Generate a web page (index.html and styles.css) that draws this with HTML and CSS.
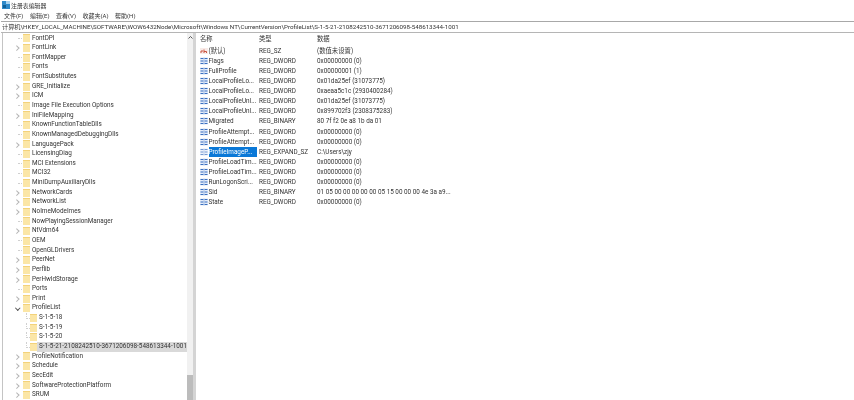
FILE: index.html
```html
<!DOCTYPE html>
<html lang="en">
<head>
    <meta charset="UTF-8">
    <title>注册表编辑器</title>
    <link rel="stylesheet" href="styles.css">
</head>
<body>
    <svg class="defs" width="0" height="0">
        <symbol id="reg" viewBox="0 0 8 8">
            <rect x="0" y="0.5" width="8" height="7" fill="#e4ecf8"/>
            <path d="M0.5 1.500h3M4.500 1.500h3M0.5 4h3M4.500 4h3M0.5 6.500h3M4.500 6.500h3" stroke="#3a6fc0" stroke-width="1"/>
            <path d="M4 0.500v7" stroke="#8fb0e0" stroke-width="0.600"/>
        </symbol>
        <symbol id="str" viewBox="0 0 8 8">
            <rect x="0" y="1" width="8" height="6" fill="#f8ebe8"/>
            <path d="M1 6V4h2M4 6V2.500M4 4.500h2.500V6" stroke="#c8503c" stroke-width="1" fill="none"/>
        </symbol>
    </svg>

    <!-- title + menu -->
    <div class="titlebar">
        <svg class="appicon" width="8" height="8" viewBox="0 0 8 8"><rect width="8" height="8" fill="#2d89c8"/><rect x="4" width="4" height="3" fill="#a9d3ee"/><rect x="1" y="4" width="3" height="3" fill="#0f5f96"/></svg>
        <span>注册表编辑器</span>
    </div>
    <div class="menubar">
        <span>文件(F)</span><span>编辑(E)</span><span>查看(V)</span><span>收藏夹(A)</span><span>帮助(H)</span>
    </div>
    <div class="address">计算机\HKEY_LOCAL_MACHINE\SOFTWARE\WOW6432Node\Microsoft\Windows NT\CurrentVersion\ProfileList\S-1-5-21-2108242510-3671206098-548613344-1001</div>

    <div class="panes">
        <!-- key tree -->
        <div class="tree">
            <div class="tree-rows">
                <div class="key"><i class="fold"></i>FontDPI</div>
                <div class="key more"><i class="fold"></i>FontLink</div>
                <div class="key"><i class="fold"></i>FontMapper</div>
                <div class="key"><i class="fold"></i>Fonts</div>
                <div class="key"><i class="fold"></i>FontSubstitutes</div>
                <div class="key more"><i class="fold"></i>GRE_Initialize</div>
                <div class="key more"><i class="fold"></i>ICM</div>
                <div class="key"><i class="fold"></i>Image File Execution Options</div>
                <div class="key more"><i class="fold"></i>IniFileMapping</div>
                <div class="key"><i class="fold"></i>KnownFunctionTableDlls</div>
                <div class="key"><i class="fold"></i>KnownManagedDebuggingDlls</div>
                <div class="key more"><i class="fold"></i>LanguagePack</div>
                <div class="key"><i class="fold"></i>LicensingDiag</div>
                <div class="key"><i class="fold"></i>MCI Extensions</div>
                <div class="key"><i class="fold"></i>MCI32</div>
                <div class="key"><i class="fold"></i>MiniDumpAuxiliaryDlls</div>
                <div class="key more"><i class="fold"></i>NetworkCards</div>
                <div class="key more"><i class="fold"></i>NetworkList</div>
                <div class="key more"><i class="fold"></i>NoImeModeImes</div>
                <div class="key"><i class="fold"></i>NowPlayingSessionManager</div>
                <div class="key more"><i class="fold"></i>NtVdm64</div>
                <div class="key"><i class="fold"></i>OEM</div>
                <div class="key"><i class="fold"></i>OpenGLDrivers</div>
                <div class="key more"><i class="fold"></i>PeerNet</div>
                <div class="key more"><i class="fold"></i>Perflib</div>
                <div class="key more"><i class="fold"></i>PerHwIdStorage</div>
                <div class="key"><i class="fold"></i>Ports</div>
                <div class="key more"><i class="fold"></i>Print</div>
                <div class="key open"><i class="fold"></i>ProfileList</div>
                <div class="key sub"><i class="fold"></i>S-1-5-18</div>
                <div class="key sub"><i class="fold"></i>S-1-5-19</div>
                <div class="key sub"><i class="fold"></i>S-1-5-20</div>
                <div class="key sub"><i class="fold"></i><span class="picked">S-1-5-21-2108242510-3671206098-548613344-1001</span></div>
                <div class="key more"><i class="fold"></i>ProfileNotification</div>
                <div class="key more"><i class="fold"></i>Schedule</div>
                <div class="key more"><i class="fold"></i>SecEdit</div>
                <div class="key more"><i class="fold"></i>SoftwareProtectionPlatform</div>
                <div class="key more"><i class="fold"></i>SRUM</div>
            </div>
            <div class="scrollbar">
                <svg class="scroll-up" width="7" height="5" viewBox="0 0 7 5"><path d="M1.500 3.500L3.500 1.500L5.500 3.500" stroke="#555" fill="none"/></svg>
                <div class="thumb"></div>
            </div>
        </div>

        <!-- values -->
        <div class="values">
            <div class="val head"><span>名称</span><span>类型</span><span>数据</span></div>
            <div class="val"><span class="vname"><svg class="ico"><use href="#str"/></svg>(默认)</span><span>REG_SZ</span><span>(数值未设置)</span></div>
            <div class="val"><span class="vname"><svg class="ico"><use href="#reg"/></svg>Flags</span><span>REG_DWORD</span><span>0x00000000 (0)</span></div>
            <div class="val"><span class="vname"><svg class="ico"><use href="#reg"/></svg>FullProfile</span><span>REG_DWORD</span><span>0x00000001 (1)</span></div>
            <div class="val"><span class="vname"><svg class="ico"><use href="#reg"/></svg>LocalProfileLo...</span><span>REG_DWORD</span><span>0x01da25ef (31073775)</span></div>
            <div class="val"><span class="vname"><svg class="ico"><use href="#reg"/></svg>LocalProfileLo...</span><span>REG_DWORD</span><span>0xaeaa5c1c (2930400284)</span></div>
            <div class="val"><span class="vname"><svg class="ico"><use href="#reg"/></svg>LocalProfileUnl...</span><span>REG_DWORD</span><span>0x01da25ef (31073775)</span></div>
            <div class="val"><span class="vname"><svg class="ico"><use href="#reg"/></svg>LocalProfileUnl...</span><span>REG_DWORD</span><span>0x899702f3 (2308375283)</span></div>
            <div class="val"><span class="vname"><svg class="ico"><use href="#reg"/></svg>Migrated</span><span>REG_BINARY</span><span>80 7f f2 0e a8 1b da 01</span></div>
            <div class="val"><span class="vname"><svg class="ico"><use href="#reg"/></svg>ProfileAttempt...</span><span>REG_DWORD</span><span>0x00000000 (0)</span></div>
            <div class="val"><span class="vname"><svg class="ico"><use href="#reg"/></svg>ProfileAttempt...</span><span>REG_DWORD</span><span>0x00000000 (0)</span></div>
            <div class="val"><span class="vname"><svg class="ico dim"><use href="#reg"/></svg><b class="chosen">ProfileImageP...</b></span><span>REG_EXPAND_SZ</span><span>C:\Users\zjy</span></div>
            <div class="val"><span class="vname"><svg class="ico"><use href="#reg"/></svg>ProfileLoadTim...</span><span>REG_DWORD</span><span>0x00000000 (0)</span></div>
            <div class="val"><span class="vname"><svg class="ico"><use href="#reg"/></svg>ProfileLoadTim...</span><span>REG_DWORD</span><span>0x00000000 (0)</span></div>
            <div class="val"><span class="vname"><svg class="ico"><use href="#reg"/></svg>RunLogonScri...</span><span>REG_DWORD</span><span>0x00000000 (0)</span></div>
            <div class="val"><span class="vname"><svg class="ico"><use href="#reg"/></svg>Sid</span><span>REG_BINARY</span><span>01 05 00 00 00 00 00 05 15 00 00 00 4e 3a a9...</span></div>
            <div class="val"><span class="vname"><svg class="ico"><use href="#reg"/></svg>State</span><span>REG_DWORD</span><span>0x00000000 (0)</span></div>
        </div>
    </div>
</body>
</html>
```

FILE: styles.css
```css
/* regedit window, small and slightly soft like the photo */
html, body {
    margin: 0;
    height: 400px;
    overflow: hidden;
    background: #fff;
}
body {
    font-family: Roboto, "Noto Sans CJK SC", sans-serif;
    font-size: 6.35px;
    color: #333;
    display: flex;
    flex-direction: column;
    filter: blur(0.35px);
}
.defs {
    position: absolute;
}
.titlebar {
    height: 10px;
    padding-left: 2px;
    display: flex;
    align-items: center;
    gap: 1px;
    font-size: 5.900px;
}
.menubar {
    height: 10px;
    padding-left: 4px;
    display: flex;
    align-items: center;
    gap: 6.500px;
    font-size: 6px;
}
.address {
    height: 10px;
    line-height: 10px;
    margin: 1px 0 0 1px;
    padding-left: 1px;
    border-top: 1px solid #a8a8a8;
    border-bottom: 1px solid #b5b5b5;
    white-space: nowrap;
    font-size: 6.200px;
}
.panes {
    flex: 1;
    display: flex;
    min-height: 0;
}

/* left pane */
.tree {
    width: 190px;
    margin-left: 2px;
    border-left: 1px solid #c4c4c4;
    border-right: 3px solid #d4d4d4;
    display: flex;
    overflow: hidden;
}
.tree-rows {
    flex: 1;
    padding-top: 0.500px;
}
.key {
    height: 9.650px;
    line-height: 9.650px;
    padding-left: 20px;
    display: flex;
    align-items: center;
    white-space: nowrap;
    position: relative;
}
.key.sub {
    padding-left: 27px;
}
.fold {
    width: 7px;
    height: 8px;
    margin-right: 2px;
    flex: none;
    background: #fbe6a6;
    border-top: 1px solid #f3d27a;
    box-sizing: border-box;
}
/* tree connectors and expand chevrons sit over the row */
.key::before {
    content: "";
    position: absolute;
    left: 15px;
    top: 4.500px;
    width: 4px;
    border-top: 1px dotted #d0d0d0;
}
.key.sub::before {
    left: 23px;
    top: 0;
    width: 3px;
    height: 5px;
    border-top: 0;
    border-left: 1px dotted #d0d0d0;
    border-bottom: 1px dotted #d0d0d0;
}
.key.more::before {
    left: 12px;
    top: 3px;
    width: 2.500px;
    height: 2.500px;
    border-top: 1px solid #b4b4b4;
    border-right: 1px solid #b4b4b4;
    transform: rotate(45deg);
}
.key.open::before {
    left: 13px;
    top: 2.500px;
    width: 2.500px;
    height: 2.500px;
    border-top: 0;
    border-bottom: 1px solid #555;
    border-right: 1px solid #555;
    transform: rotate(45deg);
}
.picked {
    background: #d9d9d9;
    flex: 1;
    margin-left: -2px;
    padding-left: 2px;
}
.scrollbar {
    width: 7px;
    flex: none;
    background: #f1f1f1;
    display: flex;
    flex-direction: column;
    justify-content: space-between;
}
.scroll-up {
    margin-top: 2px;
}
.thumb {
    height: 25px;
    background: #bcbcbc;
}

/* right pane */
.values {
    flex: 1;
    padding: 1px 0 0 4px;
}
.val {
    height: 10.130px;
    line-height: 10.130px;
    display: flex;
    white-space: nowrap;
}
.val.head {
    height: 11.500px;
}
.val span:first-child {
    width: 59px;
}
.val span:nth-child(2) {
    width: 58px;
}
.vname {
    display: flex;
    align-items: center;
}
.ico {
    width: 8px;
    height: 8px;
    margin-right: 0.500px;
    flex: none;
}
.ico.dim {
    opacity: 0.7;
}
.chosen {
    font-weight: normal;
    background: #0a78d7;
    color: #fff;
    width: 48px;
    overflow: hidden;
}
```
